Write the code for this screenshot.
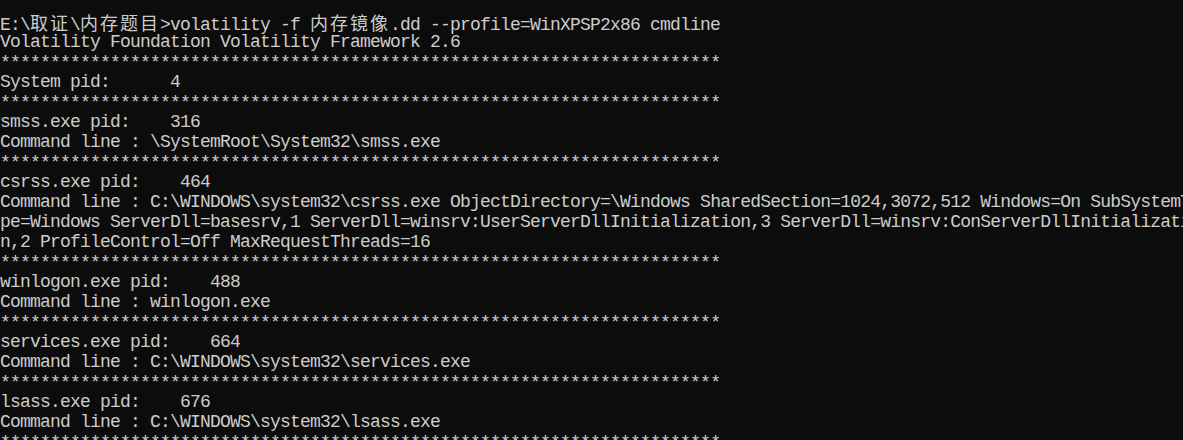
import React from "react";

const STARS = "*".repeat(72);

const LINES: string[] = [
  "E:\\取证\\内存题目>volatility -f 内存镜像.dd --profile=WinXPSP2x86 cmdline",
  "Volatility Foundation Volatility Framework 2.6",
  STARS,
  "System pid:      4",
  STARS,
  "smss.exe pid:    316",
  "Command line : \\SystemRoot\\System32\\smss.exe",
  STARS,
  "csrss.exe pid:    464",
  "Command line : C:\\WINDOWS\\system32\\csrss.exe ObjectDirectory=\\Windows SharedSection=1024,3072,512 Windows=On SubSystemTy",
  "pe=Windows ServerDll=basesrv,1 ServerDll=winsrv:UserServerDllInitialization,3 ServerDll=winsrv:ConServerDllInitializatio",
  "n,2 ProfileControl=Off MaxRequestThreads=16",
  STARS,
  "winlogon.exe pid:    488",
  "Command line : winlogon.exe",
  STARS,
  "services.exe pid:    664",
  "Command line : C:\\WINDOWS\\system32\\services.exe",
  STARS,
  "lsass.exe pid:    676",
  "Command line : C:\\WINDOWS\\system32\\lsass.exe",
  STARS,
];

function renderLine(text: string) {
  const parts: React.ReactNode[] = [];
  let buf = "";
  let cjk = "";
  const flushBuf = () => {
    if (buf) {
      parts.push(buf);
      buf = "";
    }
  };
  const flushCjk = () => {
    if (cjk) {
      parts.push(
        <span
          key={parts.length}
          className="font-['Noto_Sans_CJK_SC',sans-serif] text-[18px] tracking-[2px] leading-[20px]"
        >
          {cjk}
        </span>
      );
      cjk = "";
    }
  };
  for (const ch of text) {
    if (/[\u3000-\u9fff]/.test(ch)) {
      flushBuf();
      cjk += ch;
    } else {
      flushCjk();
      buf += ch;
    }
  }
  flushBuf();
  flushCjk();
  return parts;
}

export default function App() {
  return (
    <div className="w-full h-[440px] overflow-hidden bg-[#0c0c0c] text-[#cccccc] pt-[12px] font-['Liberation_Mono','Noto_Sans_CJK_SC',monospace] text-[18px] tracking-[-0.8px]">
      {LINES.map((l, i) => (
        <div key={i} className="h-[20px] leading-[20px] whitespace-pre">
          {l === STARS ? (
            <span className="inline-block translate-y-[1px]">{l}</span>
          ) : (
            renderLine(l)
          )}
        </div>
      ))}
    </div>
  );
}
